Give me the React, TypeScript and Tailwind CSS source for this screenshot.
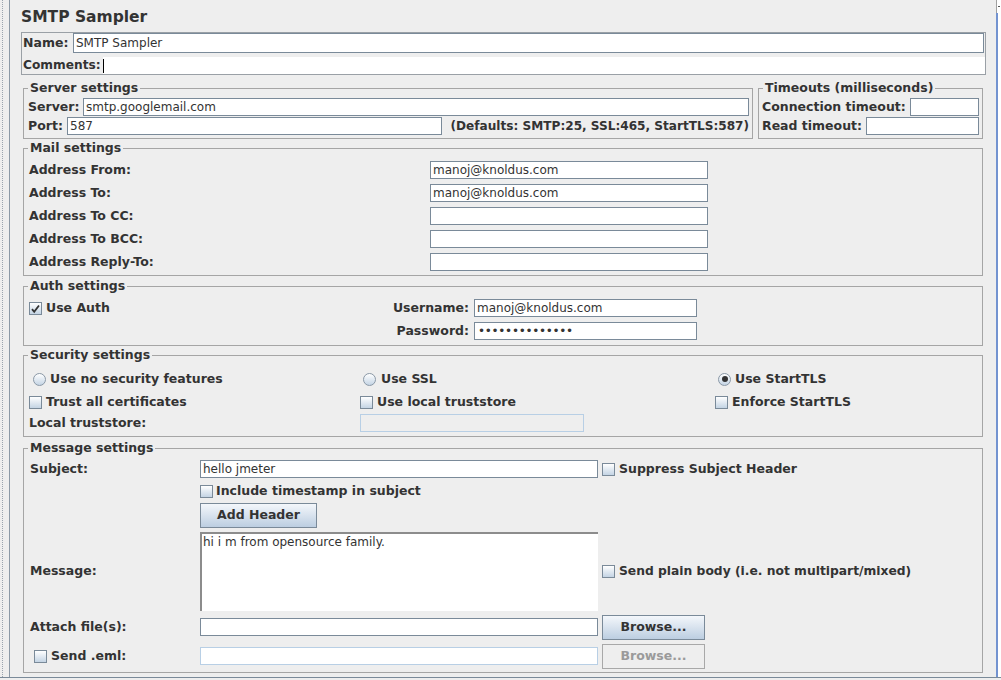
import React from 'react';

const FONT = "font-['DejaVu_Sans',sans-serif]";

function TextField({ value, className = '', disabled = false }: { value?: string; className?: string; disabled?: boolean }) {
  return (
    <div
      className={`h-[18px] border flex items-center px-[2px] whitespace-nowrap overflow-hidden text-[12px] ${
        disabled ? 'border-[#b8cfe5] bg-[#eeeeee]' : 'border-[#7a8a99] bg-white'
      } ${className}`}
    >
      {value}
    </div>
  );
}

function CheckBox({ checked = false }: { checked?: boolean }) {
  return (
    <span className="w-[13px] h-[13px] shrink-0 border border-[#7a8a99] bg-linear-to-b from-[#ffffff] to-[#c4d4e4] flex items-center justify-center">
      {checked && (
        <svg width="11" height="11" viewBox="0 0 11 11">
          <path d="M2 6.2 L4.2 8.8 L9 2.5" fill="none" stroke="#333" strokeWidth="1.8" />
        </svg>
      )}
    </span>
  );
}

function Radio({ checked = false }: { checked?: boolean }) {
  return (
    <span className="w-[13px] h-[13px] shrink-0 rounded-full border border-[#8a98a6] bg-linear-to-b from-[#ffffff] to-[#c4d4e4] flex items-center justify-center">
      {checked && <span className="w-[6px] h-[6px] rounded-full bg-[#333]" />}
    </span>
  );
}

function Button({ label, width, disabled = false }: { label: string; width: string; disabled?: boolean }) {
  return (
    <div
      className={`${width} h-[25px] border flex items-center justify-center font-bold ${
        disabled
          ? 'border-[#a8a8a8] bg-[#eeeeee] text-[#9a9a9a]'
          : 'border-[#7a8a99] bg-linear-to-b from-[#f4f7fb] to-[#bccee1]'
      }`}
    >
      {label}
    </div>
  );
}

// titled border: the legend sits on the line, content padding lives on an inner div
function Group({
  title,
  className = '',
  inner = '',
  children,
}: {
  title: string;
  className?: string;
  inner?: string;
  children?: React.ReactNode;
}) {
  return (
    <fieldset className={`border border-[#a5a5a5] min-w-0 ${className}`}>
      <legend className="ml-[4px] px-[2px] font-bold leading-[14px]">{title}</legend>
      <div className={inner}>{children}</div>
    </fieldset>
  );
}

export default function App() {
  return (
    <div className={`w-[1001px] h-[680px] overflow-hidden bg-[#eeeeee] text-[#333333] text-[12.5px] ${FONT} flex flex-col`}>
      <div className="flex h-[677px]">
        {/* left tree divider */}
        <div className="w-[10px] shrink-0 border-r border-[#8c99a6] flex">
          <div className="ml-[2px] w-0 border-l border-dotted border-[#9aa4ae]" />
        </div>

        {/* main panel */}
        <div className="w-[986px] shrink-0 overflow-hidden pl-[11px]">
          <div className="h-[32px] pt-[8px] text-[15.5px] leading-[18px] font-bold">SMTP Sampler</div>

          <div className="w-[965px] h-[43px] border border-[#9aa0a6] flex flex-col">
            <div className="h-[20px] flex items-center">
              <span className="w-[51px] pl-[1px] font-bold">Name:</span>
              <div className="flex-1 mr-[1px] h-[20px] border border-[#7a8a99] bg-white px-[2px] flex items-center text-[12px]">SMTP Sampler</div>
            </div>
            <div className="mt-[4px] h-[17px] flex items-center">
              <span className="w-[81px] pl-[1px] font-bold text-[12.2px]">Comments:</span>
              <div className="flex-1 h-[17px] bg-white flex items-center">
                <span className="w-[1px] h-[14px] bg-black" />
              </div>
            </div>
          </div>

          <div className="ml-[2px] w-[960px] flex flex-col">
            <div className="mt-[6px] flex">
              <Group title="Server settings" className="w-[730px]" inner="pt-[3px] pb-[3px] pr-[3px]">
                <div className="h-[18px] flex items-center">
                  <span className="w-[59px] pl-[4px] font-bold">Server:</span>
                  <TextField value="smtp.googlemail.com" className="flex-1" />
                </div>
                <div className="mt-[1px] h-[18px] flex items-center">
                  <span className="w-[43px] pl-[4px] font-bold">Port:</span>
                  <TextField value="587" className="w-[375px]" />
                  <span className="ml-auto font-bold whitespace-nowrap text-[12.1px]">(Defaults: SMTP:25, SSL:465, StartTLS:587)</span>
                </div>
              </Group>
              <Group title="Timeouts (milliseconds)" className="ml-[5px] w-[225px]" inner="pt-[3px] pb-[3px] pl-[3px] pr-[3px]">
                <div className="h-[18px] flex items-center justify-between">
                  <span className="font-bold whitespace-nowrap">Connection timeout:</span>
                  <TextField className="w-[69px]" />
                </div>
                <div className="mt-[1px] h-[18px] flex items-center justify-between">
                  <span className="font-bold whitespace-nowrap">Read timeout:</span>
                  <TextField className="w-[113px]" />
                </div>
              </Group>
            </div>

            <Group title="Mail settings" className="mt-[2px]" inner="pt-[6px] pb-[4px] pl-[5px] flex flex-col gap-[5px]">
              {[
                ['Address From:', 'manoj@knoldus.com'],
                ['Address To:', 'manoj@knoldus.com'],
                ['Address To CC:', ''],
                ['Address To BCC:', ''],
                ['Address Reply-To:', ''],
              ].map(([label, value]) => (
                <div key={label} className="h-[18px] flex items-center">
                  <span className="w-[401px] font-bold">{label}</span>
                  <TextField value={value} className="w-[278px]" />
                </div>
              ))}
            </Group>

            <Group title="Auth settings" className="mt-[3px]" inner="pt-[6px] pb-[5px]">
              <div className="h-[18px] flex items-center">
                <div className="w-[364px] pl-[5px] flex items-center gap-[4px]">
                  <CheckBox checked />
                  <span className="font-bold">Use Auth</span>
                </div>
                <span className="w-[81px] text-right font-bold">Username:</span>
                <TextField value="manoj@knoldus.com" className="ml-[5px] w-[223px]" />
              </div>
              <div className="mt-[5px] h-[18px] flex items-center">
                <div className="w-[364px]" />
                <span className="w-[81px] text-right font-bold">Password:</span>
                <TextField value="••••••••••••••" className="ml-[5px] w-[223px] tracking-[-0.3px] pl-[3px]" />
              </div>
            </Group>

            <Group title="Security settings" className="mt-[2px]" inner="pt-[8px] pb-[4px]">
              <div className="h-[18px] flex items-center">
                <div className="w-[336px] pl-[9px] flex items-center gap-[4px]">
                  <Radio />
                  <span className="font-bold">Use no security features</span>
                </div>
                <div className="w-[355px] pl-[3px] flex items-center gap-[5px]">
                  <Radio />
                  <span className="font-bold">Use SSL</span>
                </div>
                <div className="pl-[3px] flex items-center gap-[4px]">
                  <Radio checked />
                  <span className="font-bold">Use StartTLS</span>
                </div>
              </div>
              <div className="mt-[5px] h-[18px] flex items-center">
                <div className="w-[336px] pl-[5px] flex items-center gap-[4px]">
                  <CheckBox />
                  <span className="font-bold">Trust all certificates</span>
                </div>
                <div className="w-[355px] flex items-center gap-[4px]">
                  <CheckBox />
                  <span className="font-bold">Use local truststore</span>
                </div>
                <div className="flex items-center gap-[4px]">
                  <CheckBox />
                  <span className="font-bold">Enforce StartTLS</span>
                </div>
              </div>
              <div className="mt-[3px] h-[18px] flex items-center">
                <span className="w-[336px] pl-[5px] font-bold">Local truststore:</span>
                <TextField disabled className="w-[224px]" />
              </div>
            </Group>

            <Group title="Message settings" className="mt-[4px]" inner="pt-[5px] pb-[3px] pl-[6px]">
              <div className="grid grid-cols-[170px_398px_1fr] items-center">
                <span className="h-[18px] flex items-center font-bold">Subject:</span>
                <TextField value="hello jmeter" />
                <div className="pl-[4px] flex items-center gap-[4px]">
                  <CheckBox />
                  <span className="font-bold">Suppress Subject Header</span>
                </div>

                <span />
                <div className="mt-[4px] h-[18px] flex items-center gap-[3px]">
                  <CheckBox />
                  <span className="font-bold">Include timestamp in subject</span>
                </div>
                <span />

                <span />
                <div className="mt-[2px] flex">
                  <Button label="Add Header" width="w-[117px]" />
                </div>
                <span />

                <span className="mt-[4px] font-bold">Message:</span>
                <div className="mt-[4px] h-[79px] border-t-2 border-l-2 border-[#8c8c8c] bg-white px-[1px] pt-[1px] leading-[14px] text-[12px]">
                  hi i m from opensource family.
                </div>
                <div className="mt-[4px] pl-[4px] flex items-center gap-[4px]">
                  <CheckBox />
                  <span className="font-bold text-[12.3px]">Send plain body (i.e. not multipart/mixed)</span>
                </div>

                <span className="mt-[4px] font-bold">Attach file(s):</span>
                <TextField className="mt-[4px]" />
                <div className="mt-[4px] pl-[4px] flex">
                  <Button label="Browse..." width="w-[103px]" />
                </div>

                <div className="mt-[4px] pl-[4px] flex items-center gap-[4px]">
                  <CheckBox />
                  <span className="font-bold">Send .eml:</span>
                </div>
                <div className="mt-[4px] h-[18px] border border-[#b8cfe5] bg-white" />
                <div className="mt-[4px] pl-[4px] flex">
                  <Button label="Browse..." width="w-[103px]" disabled />
                </div>
              </div>
            </Group>

            <Group title="Additional Settings" className="mt-[3px]" inner="h-[40px]" />
          </div>
        </div>

        {/* right split pane edge */}
        <div className="w-[5px] shrink-0 flex flex-col">
          <div className="h-[13px] border-l border-[#a0a0a0] bg-white flex items-center justify-center">
            <span className="w-[2px] h-[1px] bg-[#555]" />
          </div>
          <div className="flex-1 border-l-2 border-[#7393d0] bg-white" />
        </div>
      </div>
      <div className="h-[3px] border-t border-[#7a8a99]" />
    </div>
  );
}
